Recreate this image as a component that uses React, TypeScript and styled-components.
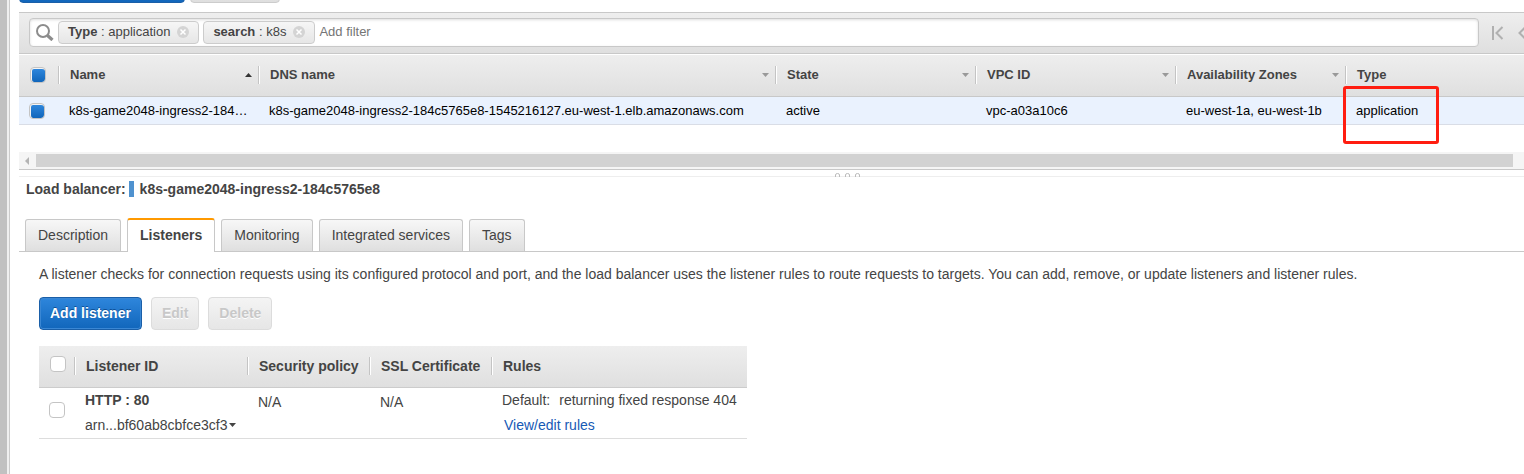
import React from "react";
import styled, { createGlobalStyle, css } from "styled-components";

const GlobalStyle = createGlobalStyle`
  * { box-sizing: border-box; }
  body {
    margin: 0;
    background: #fff;
    color: #444;
    font-family: "Liberation Sans", Arial, sans-serif;
    font-size: 14px;
    line-height: 18px;
  }
  button, input { font: inherit; }
  table { border-collapse: separate; border-spacing: 0; table-layout: fixed; }
  th, td { padding: 0; text-align: left; }
`;

const greyFade = "linear-gradient(#eeeeee, #dfdfdf)";
const blueFade = "linear-gradient(#2e86dc, #1166bb)";

const Shell = styled.div`
  display: flex;
  min-height: 100vh;
  overflow: hidden;
`;

const Rail = styled.div`
  flex: none;
  width: 10px;
  margin-right: 9px;
  background: #f0f0f0;
  border-left: 7px solid #c1c1c1;
  border-right: 1px solid #ccc;
`;

const Main = styled.main`
  flex: 1;
  min-width: 0;
`;

const ActionStrip = styled.div`
  display: flex;
  align-items: flex-end;
  gap: 5px;
  height: 3px;
  margin-bottom: 9px;
`;

const ActionButton = styled.button<{ $primary?: boolean }>`
  width: ${(p) => (p.$primary ? 166 : 90)}px;
  height: 33px;
  padding: 0;
  border: 1px solid ${(p) => (p.$primary ? "#1a5fa8" : "#ccc")};
  border-radius: 4px;
  background: ${(p) => (p.$primary ? blueFade : greyFade)};
`;

const FilterBar = styled.div`
  display: flex;
  align-items: center;
  height: 42px;
  padding-left: 10px;
  border: solid #c8c8c8;
  border-width: 1px 0;
  background: ${greyFade};
`;

const FilterField = styled.div`
  display: flex;
  flex: 1;
  align-items: center;
  gap: 4px;
  height: 29px;
  margin-bottom: 2px;
  padding-left: 6px;
  border: 1px solid #c8c8c8;
  border-radius: 4px;
  background: #fff;
  box-shadow: inset 0 1px 3px #ddd;
  font-size: 13px;
`;

const Chip = styled.span`
  display: flex;
  align-items: center;
  height: 23px;
  padding: 0 9px;
  border: 1px solid #ccc;
  border-radius: 4px;
  background: linear-gradient(#f6f6f6, #e6e6e6);
  white-space: pre;
`;

const ChipClose = styled.button`
  display: flex;
  margin-left: 7px;
  padding: 0;
  border: 0;
  background: none;
`;

const FilterInput = styled.input`
  flex: 1;
  min-width: 0;
  padding: 0;
  border: 0;
  outline: 0;
  background: none;
  &::placeholder { color: #757575; }
`;

const Pager = styled.div`
  display: flex;
  flex: none;
  gap: 14px;
  width: 45px;
  padding-left: 13px;
  overflow: hidden;
`;

const PagerButton = styled.button`
  display: flex;
  padding: 0;
  border: 0;
  background: none;
`;

const CheckBox = styled.input.attrs({ type: "checkbox" })`
  appearance: none;
  display: block;
  width: 16px;
  height: 16px;
  margin: 0;
  border: 1px solid #c4c4c4;
  border-radius: 4px;
  background: #fff;
  &:checked {
    padding: 1px 0 0 1px;
    background: ${blueFade} content-box, #f4f4f4;
  }
`;

const BalancerTable = styled.table`
  width: 100%;
  margin-top: 1px;
  font-size: 13px;
  color: #000;
  th {
    height: 42px;
    padding-bottom: 2px;
    border-bottom: 1px solid #c8c8c8;
    color: #444;
  }
  td {
    position: relative;
    height: 28px;
    padding-left: 10px;
    border-bottom: 1px solid #d9dde6;
    background: #eaf2fe;
    white-space: nowrap;
  }
  thead { background: ${greyFade}; }
`;

const HeadCell = styled.div<{ $last?: boolean }>`
  display: flex;
  align-items: center;
  justify-content: space-between;
  height: 18px;
  padding: 0 6px 0 11px;
  white-space: nowrap;
  ${(p) =>
    !p.$last &&
    css`
      border-right: 1px solid #c4c4c4;
      box-shadow: 1px 0 #fff;
    `}
`;

const Highlight = styled.div`
  position: absolute;
  top: -11px;
  left: -3px;
  width: 96px;
  height: 58px;
  border: 3px solid #ff1d10;
  border-radius: 3px;
`;

const ScrollTrack = styled.div`
  display: flex;
  align-items: center;
  height: 18px;
  margin-top: 27px;
  padding: 0 11px 0 6px;
  gap: 7px;
  border-bottom: 1px solid #c8c8c8;
  background: #f5f5f5;
`;

const ScrollThumb = styled.div`
  flex: 1;
  height: 13px;
  background: #d2d2d2;
`;

const Splitter = styled.div`
  display: flex;
  align-items: flex-end;
  justify-content: center;
  height: 7px;
  padding-left: 152px;
  border-bottom: 1px solid #eee;
  svg { margin-bottom: -1px; flex: none; }
`;

const Title = styled.h2`
  display: flex;
  align-items: center;
  gap: 4px;
  margin: 0;
  padding: 4px 0 0 7px;
  font-size: 14px;
  line-height: 16px;
`;

const Marker = styled.span`
  width: 5px;
  height: 16px;
  margin: 0 2px 0 -1px;
  background: #4f92cf;
`;

const Tabs = styled.nav`
  display: flex;
  align-items: flex-end;
  gap: 6px;
  height: 34px;
  margin-top: 21px;
  padding-left: 6px;
  border-bottom: 1px solid #c8c8c8;
`;

const Tab = styled.button<{ $active?: boolean }>`
  height: 32px;
  padding: 0 12px 2px;
  border: 1px solid #c8c8c8;
  border-bottom: 0;
  border-radius: 3px 3px 0 0;
  background: linear-gradient(#f7f7f7, #dfdfdf);
  color: #444;
  ${(p) =>
    p.$active &&
    css`
      height: 34px;
      margin-bottom: -1px;
      border-top: 2px solid #f90;
      background: #fff;
      font-weight: bold;
    `}
`;

const Panel = styled.section`
  padding: 13px 20px;
`;

const Intro = styled.p`
  margin: 0 0 14px;
`;

const ButtonRow = styled.div`
  display: flex;
  gap: 9px;
  margin-bottom: 16px;
`;

const Button = styled.button<{ $primary?: boolean }>`
  height: 33px;
  padding: 0 10px 2px;
  border: 1px solid #dcdcdc;
  border-radius: 4px;
  background: linear-gradient(#f4f4f4, #e6e6e6);
  color: #c8c8c8;
  font-weight: bold;
  text-shadow: 0 1px #fff;
  ${(p) =>
    p.$primary &&
    css`
      border-color: #1a5fa8;
      background: ${blueFade};
      box-shadow: inset 0 0 0 1px #3a87d4;
      color: #fff;
      text-shadow: 0 -1px #0d4f95;
    `}
`;

const ListenerTable = styled.table`
  width: 708px;
  th {
    height: 42px;
    padding-bottom: 2px;
    border-bottom: 1px solid #ccc;
  }
  thead { background: ${greyFade}; }
  td {
    height: 51px;
    padding: 0 0 2px 10px;
    border-bottom: 1px solid #ddd;
    white-space: nowrap;
  }
  input { margin-bottom: 4px; }
`;

const Stack = styled.div`
  display: grid;
  gap: 7px;
  justify-items: start;
`;

const RuleLine = styled.div`
  display: flex;
  gap: 9px;
`;

const PolicyText = styled.div`
  height: 39px;
`;

const ArnButton = styled.button`
  display: flex;
  align-items: center;
  gap: 2px;
  padding: 0;
  border: 0;
  background: none;
  color: #444;
`;

const RuleLink = styled.a`
  padding-left: 2px;
  color: #1659b5;
  text-decoration: none;
`;

const CaretDown = ({ color = "#999" }: { color?: string }) => (
  <svg width="7" height="4" viewBox="0 0 7 4" aria-hidden="true">
    <path d="M0 0h7L3.500 4z" fill={color} />
  </svg>
);

const CaretUp = () => (
  <svg width="7" height="4" viewBox="0 0 7 4" aria-hidden="true">
    <path d="M0 4h7L3.500 0z" fill="#333" />
  </svg>
);

const SearchIcon = () => (
  <svg width="18" height="18" viewBox="0 0 18 18" fill="none" stroke="#8c8c8c" aria-hidden="true">
    <circle cx="7" cy="8" r="6" strokeWidth="2" />
    <path d="M11.500 12.500l5 4.500" strokeWidth="3.200" />
  </svg>
);

const CloseIcon = () => (
  <svg width="12" height="12" viewBox="0 0 12 12" aria-hidden="true">
    <circle cx="6" cy="6" r="6" fill="#d4d4d4" />
    <path d="M3.500 3.500l5 5M8.500 3.500l-5 5" stroke="#fff" strokeWidth="1.500" />
  </svg>
);

const filters = [
  { key: "Type", value: "application" },
  { key: "search", value: "k8s" },
];

const columns = [
  { label: "Name", width: 200, icon: <CaretUp /> },
  { label: "DNS name", width: 517, icon: <CaretDown /> },
  { label: "State", width: 200, icon: <CaretDown /> },
  { label: "VPC ID", width: 200, icon: <CaretDown /> },
  { label: "Availability Zones", width: 170, icon: <CaretDown /> },
  { label: "Type" },
];

const listenerColumns = [
  { label: "Listener ID", width: 173 },
  { label: "Security policy", width: 122 },
  { label: "SSL Certificate", width: 122 },
  { label: "Rules" },
];

const tabs = ["Description", "Listeners", "Monitoring", "Integrated services", "Tags"];

export default function App() {
  return (
    <Shell>
      <GlobalStyle />
      <Rail />
      <Main>
        <ActionStrip>
          <ActionButton $primary aria-label="Create load balancer" />
          <ActionButton aria-label="Actions" />
        </ActionStrip>

        <FilterBar>
          <FilterField>
            <SearchIcon />
            {filters.map((f) => (
              <Chip key={f.key}>
                <b>{f.key}</b> : {f.value}
                <ChipClose aria-label={`Remove ${f.key}`}>
                  <CloseIcon />
                </ChipClose>
              </Chip>
            ))}
            <FilterInput placeholder="Add filter" aria-label="Add filter" />
          </FilterField>
          <Pager>
            <PagerButton aria-label="First page">
              <svg width="12" height="14" viewBox="0 0 12 14" fill="none" stroke="#b0b0b0" strokeWidth="2">
                <path d="M1 0v14M10.500 1L4.500 7l6 6" />
              </svg>
            </PagerButton>
            <PagerButton aria-label="Previous page">
              <svg width="8" height="14" viewBox="0 0 8 14" fill="none" stroke="#b0b0b0" strokeWidth="2">
                <path d="M7.500 1L1.500 7l6 6" />
              </svg>
            </PagerButton>
          </Pager>
        </FilterBar>

        <BalancerTable>
          <colgroup>
            <col width={40} />
            {columns.map((c) => (
              <col key={c.label} width={c.width} />
            ))}
          </colgroup>
          <thead>
            <tr>
              <th>
                <HeadCell>
                  <CheckBox defaultChecked aria-label="Select all load balancers" />
                </HeadCell>
              </th>
              {columns.map((c) => (
                <th key={c.label}>
                  <HeadCell $last={!c.icon}>
                    {c.label}
                    {c.icon}
                  </HeadCell>
                </th>
              ))}
            </tr>
          </thead>
          <tbody>
            <tr>
              <td>
                <CheckBox defaultChecked aria-label="Select load balancer" />
              </td>
              <td>k8s-game2048-ingress2-184…</td>
              <td>k8s-game2048-ingress2-184c5765e8-1545216127.eu-west-1.elb.amazonaws.com</td>
              <td>active</td>
              <td>vpc-a03a10c6</td>
              <td>eu-west-1a, eu-west-1b</td>
              <td>
                application
                <Highlight />
              </td>
            </tr>
          </tbody>
        </BalancerTable>

        <ScrollTrack>
          <svg width="4" height="8" viewBox="0 0 4 8" aria-hidden="true">
            <path d="M4 0v8L0 4z" fill="#b4b4b4" />
          </svg>
          <ScrollThumb />
        </ScrollTrack>
        <Splitter>
          <svg width="25" height="4" viewBox="0 0 25 4" fill="none" stroke="#bbb" aria-hidden="true">
            <path d="M.5 4V2q0-1.500 2-1.500t2 1.500v2M10.500 4V2q0-1.500 2-1.500t2 1.500v2M20.500 4V2q0-1.500 2-1.500t2 1.500v2" />
          </svg>
        </Splitter>

        <Title>
          Load balancer: <Marker /> k8s-game2048-ingress2-184c5765e8
        </Title>

        <Tabs>
          {tabs.map((t) => (
            <Tab key={t} $active={t === "Listeners"}>
              {t}
            </Tab>
          ))}
        </Tabs>

        <Panel>
          <Intro>
            A listener checks for connection requests using its configured protocol and port, and the load balancer
            uses the listener rules to route requests to targets. You can add, remove, or update listeners and listener
            rules.
          </Intro>
          <ButtonRow>
            <Button $primary>Add listener</Button>
            <Button disabled>Edit</Button>
            <Button disabled>Delete</Button>
          </ButtonRow>

          <ListenerTable>
            <colgroup>
              <col width={36} />
              {listenerColumns.map((c) => (
                <col key={c.label} width={c.width} />
              ))}
            </colgroup>
            <thead>
              <tr>
                <th>
                  <HeadCell>
                    <CheckBox aria-label="Select all listeners" />
                  </HeadCell>
                </th>
                {listenerColumns.map((c) => (
                  <th key={c.label}>
                    <HeadCell $last={!c.width}>{c.label}</HeadCell>
                  </th>
                ))}
              </tr>
            </thead>
            <tbody>
              <tr>
                <td>
                  <CheckBox aria-label="Select HTTP : 80" />
                </td>
                <td>
                  <Stack>
                    <b>HTTP : 80</b>
                    <ArnButton>
                      arn...bf60ab8cbfce3cf3 <CaretDown color="#444" />
                    </ArnButton>
                  </Stack>
                </td>
                <td>
                  <PolicyText>N/A</PolicyText>
                </td>
                <td>
                  <PolicyText>N/A</PolicyText>
                </td>
                <td>
                  <Stack>
                    <RuleLine>
                      <span>Default:</span>
                      <span>returning fixed response 404</span>
                    </RuleLine>
                    <RuleLink href="#rules">View/edit rules</RuleLink>
                  </Stack>
                </td>
              </tr>
            </tbody>
          </ListenerTable>
        </Panel>
      </Main>
    </Shell>
  );
}
